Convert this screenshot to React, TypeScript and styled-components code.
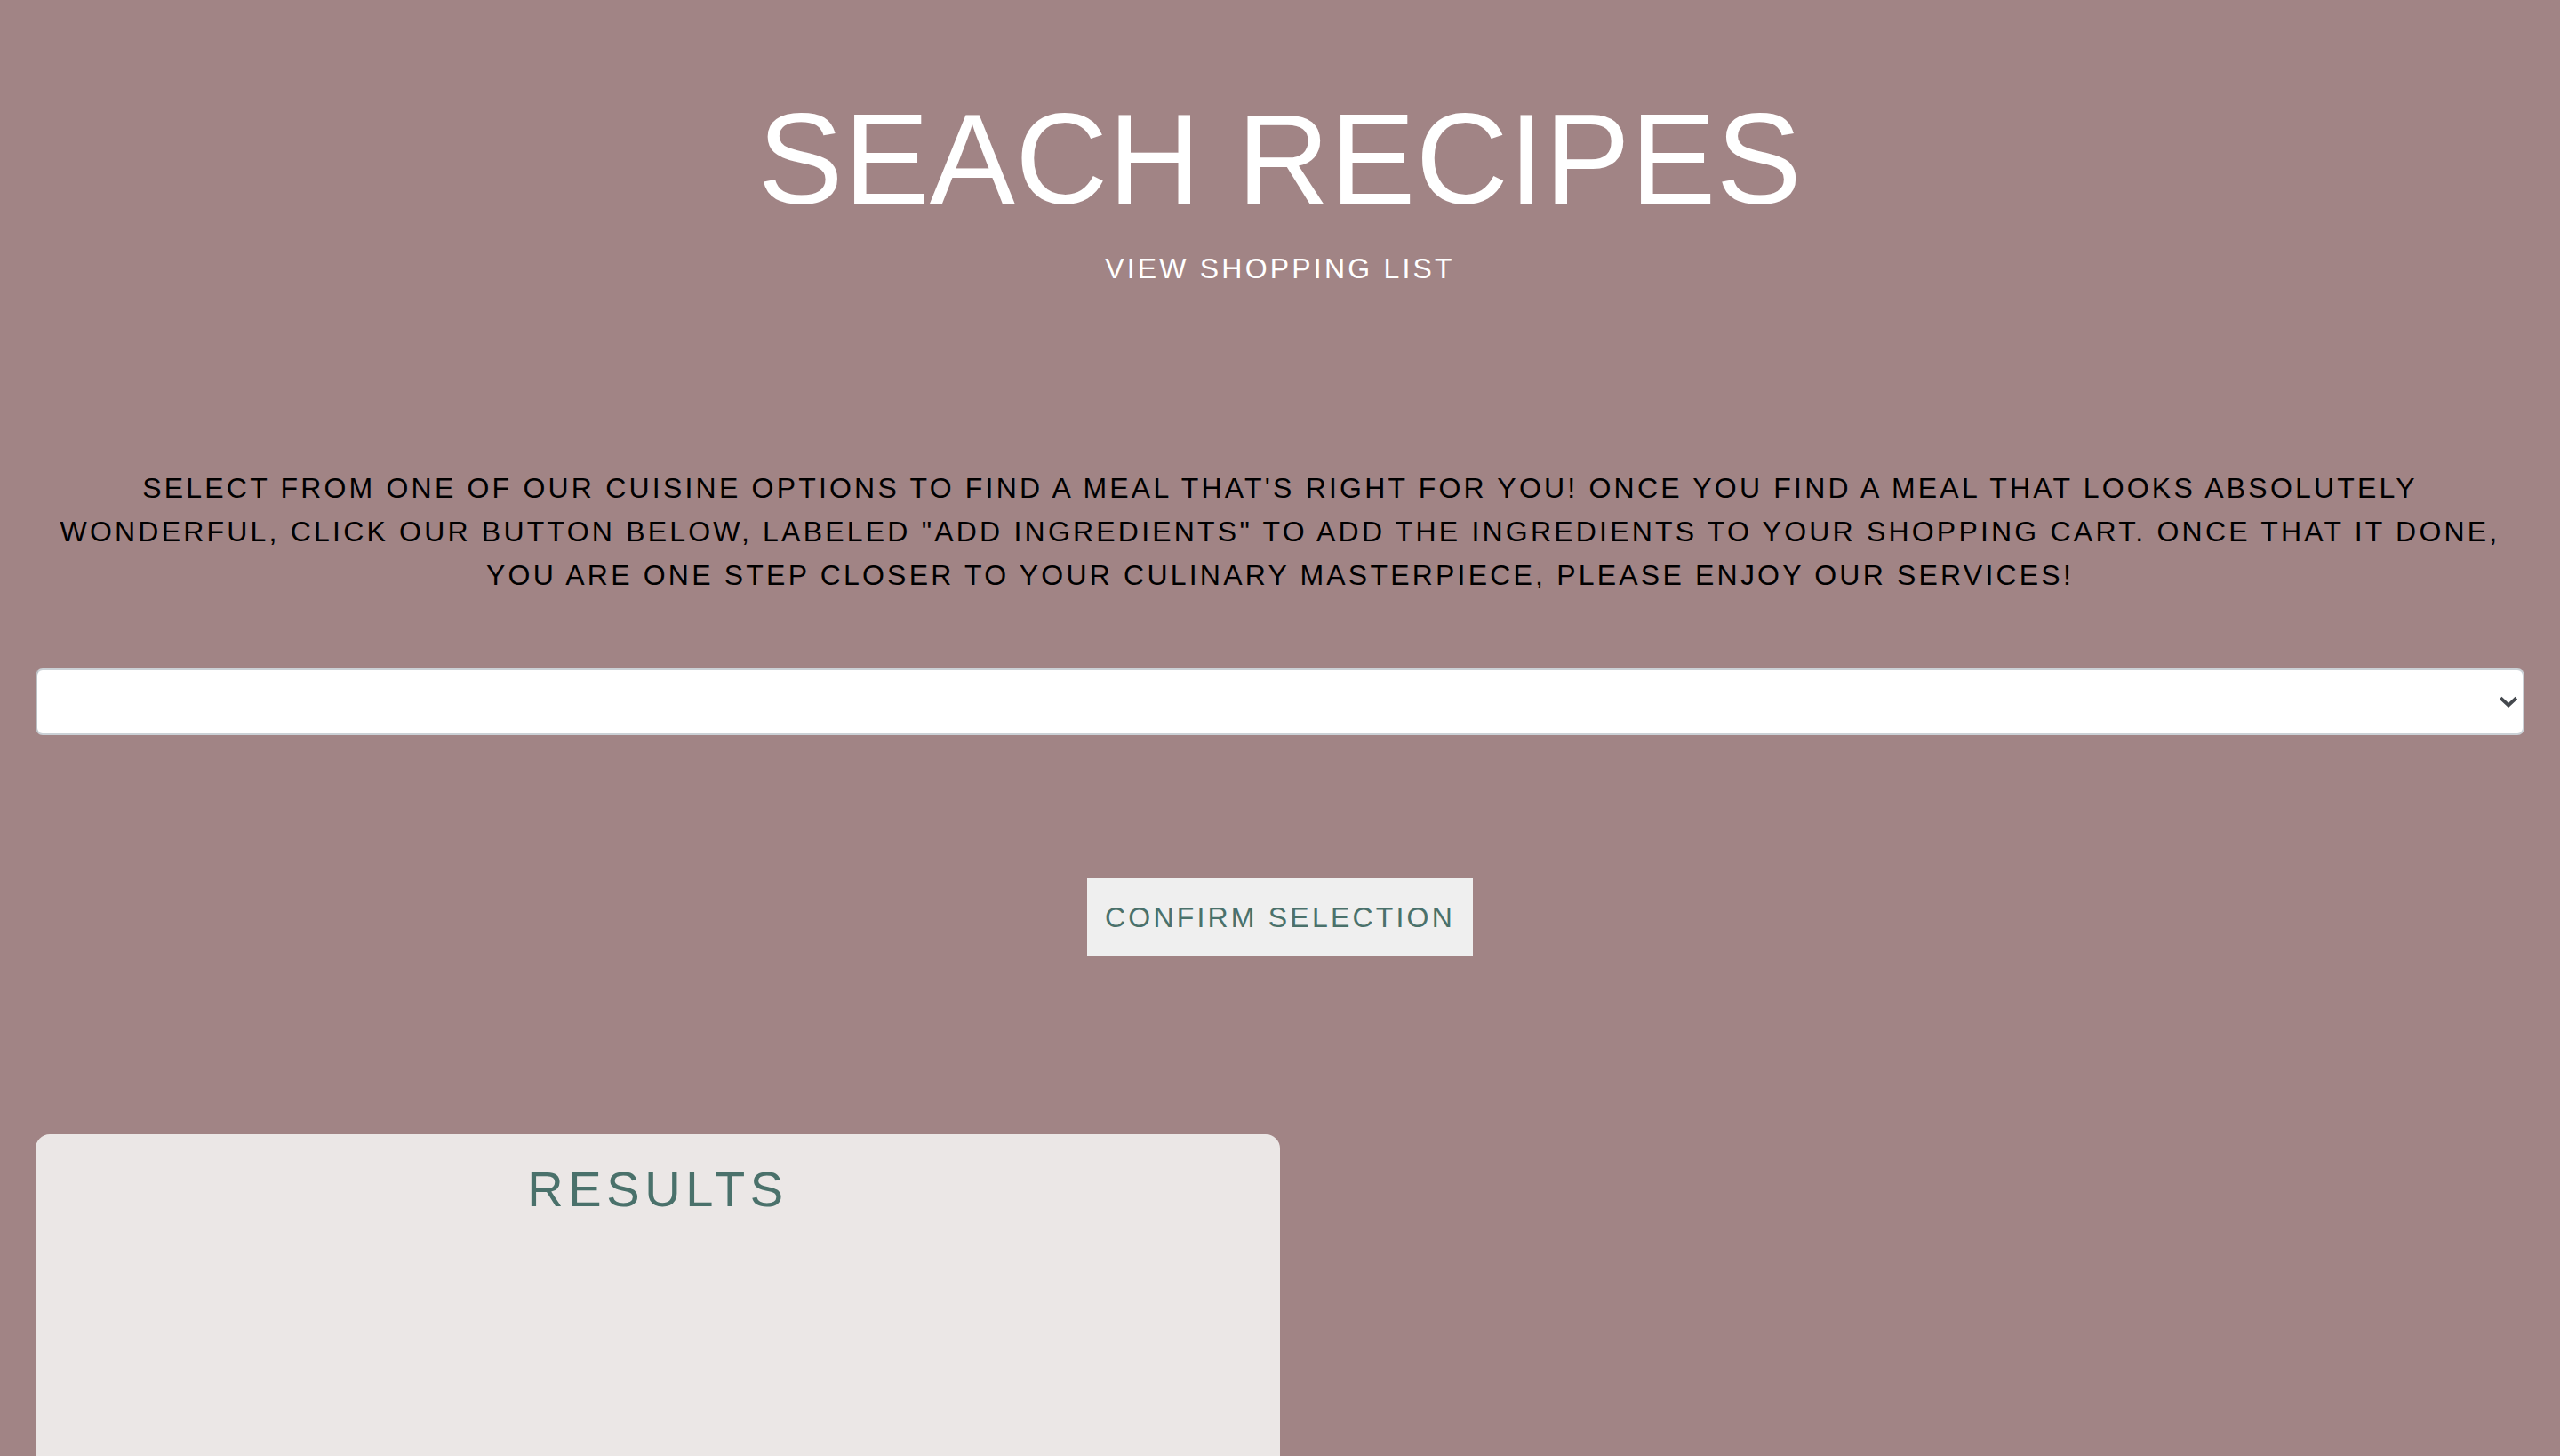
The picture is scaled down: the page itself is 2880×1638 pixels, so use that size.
import React from "react";
import styled, { createGlobalStyle } from "styled-components";

const GlobalStyle = createGlobalStyle`
  html, body {
    margin: 0;
    padding: 0;
    background: #a18485;
  }
  body {
    font-family: "Liberation Sans", Arial, Helvetica, sans-serif;
  }
  * { box-sizing: border-box; }
`;

const Page = styled.div`
  min-height: 100vh;
  padding: 0 40px;
  background: #a18485;
  overflow: hidden;
`;

const Header = styled.header`
  display: flex;
  flex-direction: column;
  align-items: center;
  padding-top: 100px;
`;

const Title = styled.h1`
  margin: 0;
  font-size: 144px;
  line-height: 160px;
  font-weight: 400;
  letter-spacing: 0.5px;
  color: #ffffff;
`;

const NavLink = styled.a`
  margin-top: 22px;
  font-size: 32px;
  line-height: 40px;
  letter-spacing: 0.1em;
  color: #ffffff;
  text-decoration: none;
`;

const Intro = styled.p`
  margin: 203px 0 0;
  text-align: center;
  font-size: 32px;
  line-height: 49px;
  letter-spacing: 0.1em;
  color: #000000;
`;

const SelectWrap = styled.div`
  position: relative;
  margin-top: 80px;
`;

const Select = styled.select`
  display: block;
  width: 100%;
  height: 75px;
  appearance: none;
  -webkit-appearance: none;
  background: #ffffff;
  border: 2px solid #cbd1d6;
  border-left-color: #bcc0c4;
  border-radius: 8px;
  font-size: 28px;
  font-family: inherit;
  padding: 0 20px;
`;

const Chevron = styled.svg`
  position: absolute;
  right: 8px;
  top: 50%;
  transform: translateY(-50%);
  pointer-events: none;
`;

const ButtonRow = styled.div`
  display: flex;
  justify-content: center;
  margin-top: 161px;
`;

const ConfirmButton = styled.button`
  height: 88px;
  padding: 0 20px;
  background: #efefef;
  border: none;
  border-radius: 0;
  color: #4a716b;
  font-family: inherit;
  font-size: 32px;
  letter-spacing: 0.1em;
  cursor: pointer;
`;

const ResultsCard = styled.section`
  margin-top: 200px;
  width: 50%;
  min-height: 700px;
  background: #ebe7e6;
  border-radius: 16px 16px 0 0;
  padding-top: 30px;
`;

const CardTitle = styled.h2`
  margin: 0;
  text-align: center;
  font-size: 56px;
  line-height: 64px;
  font-weight: 400;
  letter-spacing: 0.1em;
  color: #4a716b;
`;

export default function App() {
  return (
    <>
      <GlobalStyle />
      <Page>
        <Header>
          <Title>SEACH RECIPES</Title>
          <NavLink href="#">VIEW SHOPPING LIST</NavLink>
        </Header>
        <Intro>
          SELECT FROM ONE OF OUR CUISINE OPTIONS TO FIND A MEAL THAT'S RIGHT FOR
          YOU! ONCE YOU FIND A MEAL THAT LOOKS ABSOLUTELY WONDERFUL, CLICK OUR
          BUTTON BELOW, LABELED "ADD INGREDIENTS" TO ADD THE INGREDIENTS TO YOUR
          SHOPPING CART. ONCE THAT IT DONE, YOU ARE ONE STEP CLOSER TO YOUR
          CULINARY MASTERPIECE, PLEASE ENJOY OUR SERVICES!
        </Intro>
        <SelectWrap>
          <Select defaultValue="">
            <option value=""></option>
          </Select>
          <Chevron width="20" height="14" viewBox="0 0 20 14">
            <path
              d="M2.5 3.5 L10 10.5 L17.5 3.5"
              fill="none"
              stroke="#45494e"
              strokeWidth="3.8"
              strokeLinecap="square"
            />
          </Chevron>
        </SelectWrap>
        <ButtonRow>
          <ConfirmButton>CONFIRM SELECTION</ConfirmButton>
        </ButtonRow>
        <ResultsCard>
          <CardTitle>RESULTS</CardTitle>
        </ResultsCard>
      </Page>
    </>
  );
}
